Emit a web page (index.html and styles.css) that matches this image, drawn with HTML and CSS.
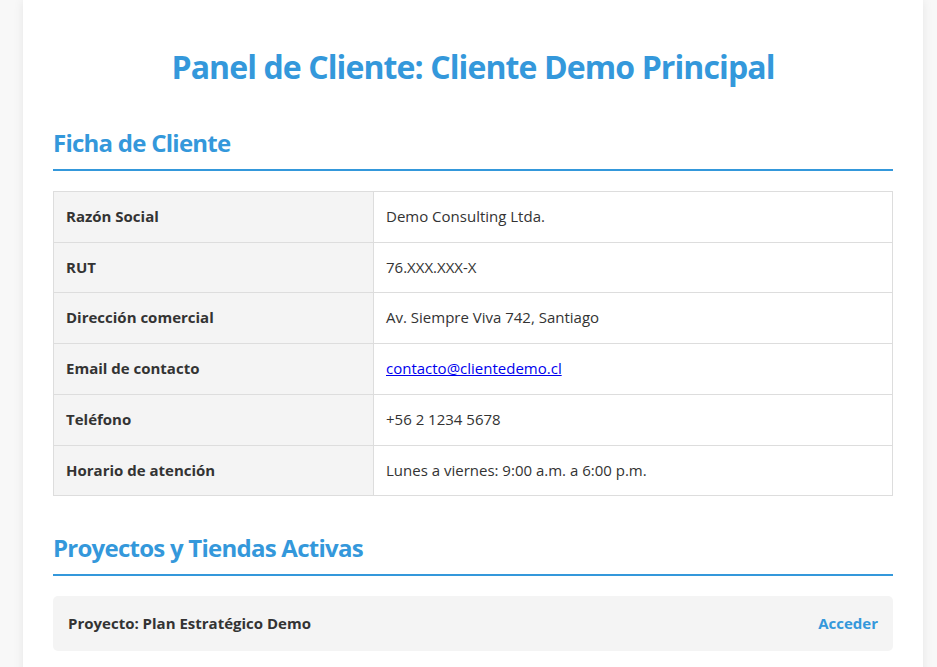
FILE: index.html
```html
<!DOCTYPE html>
<html lang="es">
<head>
<meta charset="utf-8">
<title>Panel de Cliente</title>
<link rel="stylesheet" href="styles.css">
</head>
<body>
<div class="page">
  <h1 class="title">Panel de Cliente: Cliente Demo Principal</h1>

  <h2 class="section-title">Ficha de Cliente</h2>
  <table class="info">
    <tr><th>Razón Social</th><td>Demo Consulting Ltda.</td></tr>
    <tr><th>RUT</th><td>76.XXX.XXX-X</td></tr>
    <tr><th>Dirección comercial</th><td>Av. Siempre Viva 742, Santiago</td></tr>
    <tr><th>Email de contacto</th><td><a href="#">contacto@clientedemo.cl</a></td></tr>
    <tr><th>Teléfono</th><td>+56 2 1234 5678</td></tr>
    <tr><th>Horario de atención</th><td>Lunes a viernes: 9:00 a.m. a 6:00 p.m.</td></tr>
  </table>

  <h2 class="section-title">Proyectos y Tiendas Activas</h2>
  <div class="project">
    <span class="project-name">Proyecto: Plan Estratégico Demo</span>
    <a class="project-link" href="#">Acceder</a>
  </div>
</div>
</body>
</html>
```

FILE: styles.css
```css
html, body {
  margin: 0;
  padding: 0;
}
body {
  background: #f8f8f8;
  font-family: "Open Sans", "Noto Sans", sans-serif;
  color: #333;
  font-size: 15px;
}
.page {
  width: 840px;
  margin: 0 0 0 23px;
  padding: 30px;
  background: #fff;
  box-shadow: 0 0 10px rgba(0,0,0,0.08);
  min-height: 700px;
}
.title {
  margin: 17px 0 40px;
  text-align: center;
  color: #3498db;
  font-size: 32px;
  line-height: 40px;
  font-weight: 700;
  letter-spacing: -0.9px;
}
.section-title {
  margin: 0 0 20px;
  padding-bottom: 10px;
  border-bottom: 2px solid #3498db;
  color: #3498db;
  font-size: 24px;
  line-height: 32px;
  font-weight: 700;
  letter-spacing: -0.75px;
}
.info {
  width: 100%;
  border-collapse: collapse;
  margin-bottom: 36px;
}
.info th, .info td {
  border: 1px solid #ddd;
  padding: 12px;
  line-height: 25.7px;
  text-align: left;
  font-size: 15px;
}
.info th {
  width: 295px;
  background: #f4f4f4;
  font-weight: 700;
}
.info a {
  color: #0000ee;
}
.project {
  display: flex;
  justify-content: space-between;
  align-items: center;
  padding: 15px;
  background: #f4f4f4;
  border-radius: 5px;
  line-height: 25px;
}
.project-name {
  font-weight: 700;
}
.project-link {
  color: #3498db;
  font-weight: 700;
  text-decoration: none;
}
```
